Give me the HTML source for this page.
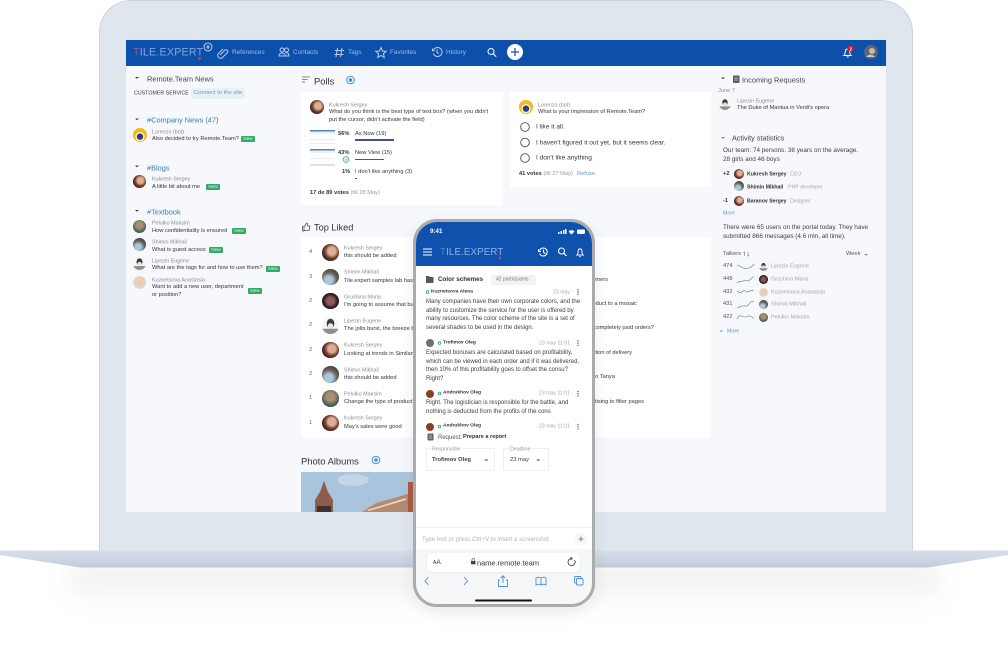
<!DOCTYPE html>
<html><head><meta charset="utf-8"><style>
html,body{margin:0;padding:0;background:#fff;width:1008px;height:658px;overflow:hidden}
body{position:relative;font-family:"Liberation Sans",sans-serif;color:#3a3d42}
.t{position:absolute;white-space:nowrap;line-height:1;transform:translateY(-50%);font-size:5.7px;color:#33363b;margin-top:.6px}
.n{color:#8a8d92;font-size:5.4px}
.h{font-size:7.4px;color:#3f4348}
.l{font-size:7.4px;color:#3b7cb9}
.v{color:#9dbde6;font-size:6.4px}
.b{position:absolute;width:14px;height:6px;background:#35a96b;color:#dff5e8;font-size:4.6px;line-height:6px;text-align:center;border-radius:1px}
.a{position:absolute;border-radius:50%;background:#654}
.k{background:radial-gradient(circle at 58% 42%,#dcae98 0 28%,#7b3f2e 50%,#2c1c1a 75%)}
.s{background:radial-gradient(circle at 40% 70%,#a8c8dc 0 25%,#6f665c 50%,#39352f 85%)}
.g{background:radial-gradient(circle at 50% 50%,#8d5a58 0 30%,#2b1a20 60%)}
.e{background:radial-gradient(circle at 50% 52%,#efe4dc 0 20%,transparent 23%),radial-gradient(ellipse at 50% 38%,#3a3a3a 0 30%,transparent 33%),linear-gradient(#f6f6f6 0 68%,#8d8f92 70%)}
.p{background:radial-gradient(circle at 50% 40%,#a79172 0 30%,#3c5a4c 70%)}
.z{background:radial-gradient(circle at 55% 45%,#e9cdb8 0 40%,#dce0e4 75%)}
.o{background:radial-gradient(circle at 50% 62%,#26407a 0 26%,#f7e9b8 30% 40%,#f3b71f 44%)}
.c{position:absolute;background:#fff}
.m{font-size:6px;color:#3c3f44}
.d{color:#a5a8ac;font-size:5.2px}
.q{font-size:5.2px;font-weight:bold;color:#2f3237}
.qq{font-size:4.9px;font-weight:bold;color:#2f3237}
.w{font-size:6.35px;color:#3c3f44}
</style></head><body>

<div style="position:absolute;left:70px;top:568px;width:870px;height:40px;background:linear-gradient(#ece9e5,#f8f8f8 60%,#fff);filter:blur(12px)"></div>

<div style="position:absolute;left:99px;top:0;width:814px;height:552px;background:#e0e6ee;border-radius:32px 32px 0 0;border:1px solid #ccd3dc;border-bottom:0;box-sizing:border-box"></div>
<svg style="position:absolute;left:0;top:0" width="1008" height="658">
<defs><linearGradient id="bs" x1="0" y1="0" x2="0" y2="1"><stop offset="0" stop-color="#d6deE8"/><stop offset=".7" stop-color="#c9d3e0"/><stop offset="1" stop-color="#c0cad8"/></linearGradient></defs>
<polygon points="0,550.5 1008,550.5 1008,555 928,567.5 80,567.5 0,555" fill="url(#bs)"/>
</svg>

<div style="position:absolute;left:126px;top:40px;width:760px;height:472px;background:#f7f8fb"></div>
<div style="position:absolute;left:126px;top:40px;width:760px;height:26px;background:#0d50a9"></div>

<!-- header -->
<div class="t" style="left:133px;top:52.5px;font-size:10.7px;color:#7ea5dc;letter-spacing:.2px"><span style="color:#8a5d9a">T</span>ILE.EXPERT</div>
<div class="t v" style="left:232px;top:52.5px">References</div>
<div class="t v" style="left:293px;top:52.5px">Contacts</div>
<div class="t v" style="left:348px;top:52.5px">Tags</div>
<div class="t v" style="left:390px;top:52.5px">Favorites</div>
<div class="t v" style="left:446px;top:52.5px">History</div>

<!-- left -->
<div class="t h" style="left:147px;top:78.5px">Remote.Team News</div>
<div class="t" style="left:134px;top:93.5px;font-size:5.3px">CUSTOMER SERVICE</div>
<div style="position:absolute;left:191px;top:88px;width:54px;height:11px;background:#e9f1f8;border-radius:1px"></div>
<div class="t" style="left:194px;top:93.5px;font-size:5.8px;color:#5c9ad0">Connect to the site</div>

<div class="t l" style="left:147px;top:119px">#Company News (47)</div>
<div class="a o" style="left:133px;top:128px;width:14px;height:14px"></div>
<div class="t n" style="left:152px;top:132px">Lorenzo (bot)</div>
<div class="t" style="left:152px;top:139.5px">Also decided to try Remote.Team?</div>
<div class="b" style="left:241px;top:136px">New</div>

<div class="t l" style="left:147px;top:167px">#Blogs</div>
<div class="a k" style="left:133px;top:175px;width:13px;height:13px"></div>
<div class="t n" style="left:152px;top:179.5px">Kukresh Sergey</div>
<div class="t" style="left:152px;top:187px">A little bit about me</div>
<div class="b" style="left:206px;top:184px">New</div>

<div class="t l" style="left:147px;top:211px">#Textbook</div>
<div class="a p" style="left:133px;top:219.5px;width:13px;height:13px"></div>
<div class="t n" style="left:152px;top:223.5px">Pelulko Maksim</div>
<div class="t" style="left:152px;top:231px">How confidentiality is ensured</div>
<div class="b" style="left:232px;top:228px">New</div>
<div class="a s" style="left:133px;top:238px;width:13px;height:13px"></div>
<div class="t n" style="left:152px;top:242.5px">Shimin Mikhail</div>
<div class="t" style="left:152px;top:250px">What is guest access</div>
<div class="b" style="left:209px;top:247px">New</div>
<div class="a e" style="left:133px;top:257px;width:13px;height:13px"></div>
<div class="t n" style="left:152px;top:261px">Lipezin Eugene</div>
<div class="t" style="left:152px;top:268.5px">What are the tags for and how to use them?</div>
<div class="b" style="left:266px;top:265.5px">New</div>
<div class="a z" style="left:133px;top:275.5px;width:13px;height:13px"></div>
<div class="t n" style="left:152px;top:280px">Kuznetsova Anastasia</div>
<div class="t" style="left:152px;top:287.5px">Want to add a new user, department</div>
<div class="t" style="left:152px;top:295px">or position?</div>
<div class="b" style="left:248px;top:288px">New</div>

<!-- polls -->
<div class="t" style="left:314px;top:80px;font-size:9.4px;color:#2f3237">Polls</div>
<div class="c" style="left:301px;top:92px;width:202px;height:113px"></div>
<div class="a k" style="left:310px;top:100px;width:14px;height:14px"></div>
<div class="t n" style="left:329px;top:105px">Kukresh Sergey</div>
<div class="t" style="left:329px;top:112.5px">What do you think is the best type of text box? (when you didn't</div>
<div class="t" style="left:329px;top:120px">put the cursor, didn't activate the field)</div>
<div style="position:absolute;left:310px;top:129px;width:25px;height:21px;background:linear-gradient(#fff 0 1px,#4a86c8 1px 2.5px,#eef1f4 2.5px 5px,#fff 5px 10px,#e8eaed 10px 11px,#fff 11px 14px,#e8eaed 14px 15px,#fff 15px)"></div>
<div style="position:absolute;left:310px;top:148px;width:25px;height:21px;background:linear-gradient(#fff 0 1px,#4a86c8 1px 2.5px,#eef1f4 2.5px 5px,#fff 5px 10px,#e8eaed 10px 11px,#fff 11px 16px,#dfe1e4 16px 18px,#fff 18px)"></div>
<div class="t" style="left:338px;top:134px;font-weight:bold;font-size:5.7px">56%</div>
<div class="t" style="left:355px;top:134px">As Now (19)</div>
<div style="position:absolute;left:355px;top:139px;width:39px;height:1.7px;background:#4a4f8e"></div>
<div class="t" style="left:338px;top:153.5px;font-weight:bold;font-size:5.7px;background:#fff">43%</div>
<div class="t" style="left:355px;top:153.5px">New View (15)</div>
<div style="position:absolute;left:355px;top:158.5px;width:29px;height:1.7px;background:#4a4f8e"></div>
<div class="t" style="left:342px;top:172px;font-weight:bold;font-size:5.7px">1%</div>
<div class="t" style="left:355px;top:172px">I don't like anything (3)</div>
<div style="position:absolute;left:355px;top:177.5px;width:2px;height:1.7px;background:#4a4f8e"></div>
<div class="t" style="left:310px;top:193px"><b>17 de 89 votes</b> <span style="color:#999">(till 28 May)</span></div>

<div class="c" style="left:510px;top:92px;width:201px;height:95px"></div>
<div class="a o" style="left:519px;top:100px;width:14px;height:14px"></div>
<div class="t n" style="left:538px;top:105px">Lorenzo (bot)</div>
<div class="t" style="left:538px;top:112.5px">What is your impression of Remote.Team?</div>
<div class="t" style="left:536px;top:127px;font-size:6.55px">I like it all.</div>
<div class="t" style="left:536px;top:143px;font-size:6.55px">I haven't figured it out yet, but it seems clear.</div>
<div class="t" style="left:536px;top:158px;font-size:6.55px">I don't like anything</div>
<div class="t" style="left:519px;top:174px"><b>41 votes</b> <span style="color:#999">(till 27 May)</span></div>
<div class="t" style="left:577px;top:174px;color:#5c9ad0">Refuse</div>

<!-- top liked -->
<div class="t" style="left:314px;top:227.5px;font-size:9.2px;color:#2f3237">Top Liked</div>
<div class="c" style="left:301px;top:237px;width:410px;height:201px"></div>

<div class="t" style="left:309px;top:252.5px;color:#666">4</div>
<div class="a k" style="left:322px;top:244px;width:16.5px;height:16.5px"></div>
<div class="t n" style="left:344px;top:248px">Kukresh Sergey</div>
<div class="t" style="left:344px;top:256.5px">this should be added</div>

<div class="t" style="left:309px;top:277px;color:#666">3</div>
<div class="a s" style="left:322px;top:268.5px;width:16.5px;height:16.5px"></div>
<div class="t n" style="left:344px;top:272.5px">Shimin Mikhail</div>
<div class="t" style="left:344px;top:281px">Tile.expert samples lab has an extensive range for customers</div>

<div class="t" style="left:309px;top:301px;color:#666">2</div>
<div class="a g" style="left:322px;top:292.5px;width:16.5px;height:16.5px"></div>
<div class="t n" style="left:344px;top:297px">Grushina Maria</div>
<div class="t" style="left:344px;top:305px">I'm going to assume that but</div>

<div class="t" style="left:309px;top:325.5px;color:#666">2</div>
<div class="a e" style="left:322px;top:317px;width:16.5px;height:16.5px"></div>
<div class="t n" style="left:344px;top:321.5px">Lipezin Eugene</div>
<div class="t" style="left:344px;top:329.5px">The jolts burst, the breeze blo</div>

<div class="t" style="left:309px;top:350px;color:#666">2</div>
<div class="a k" style="left:322px;top:341.5px;width:16.5px;height:16.5px"></div>
<div class="t n" style="left:344px;top:345.5px">Kukresh Sergey</div>
<div class="t" style="left:344px;top:354px">Looking at trends in Similarw</div>

<div class="t" style="left:309px;top:374px;color:#666">2</div>
<div class="a s" style="left:322px;top:366px;width:16.5px;height:16.5px"></div>
<div class="t n" style="left:344px;top:370px">Shimin Mikhail</div>
<div class="t" style="left:344px;top:378.5px">this should be added</div>

<div class="t" style="left:309px;top:398.5px;color:#666">1</div>
<div class="a p" style="left:322px;top:390px;width:16.5px;height:16.5px"></div>
<div class="t n" style="left:344px;top:394.5px">Pelulko Maksim</div>
<div class="t" style="left:344px;top:402.5px">Change the type of product b</div>

<div class="t" style="left:309px;top:423px;color:#666">1</div>
<div class="a k" style="left:322px;top:414.5px;width:16.5px;height:16.5px"></div>
<div class="t n" style="left:344px;top:418.5px">Kukresh Sergey</div>
<div class="t" style="left:344px;top:427px">May's sales were good</div>

<div class="t" style="right:400px;top:280px">omers</div>
<div class="t" style="right:371px;top:304.5px">roduct to a mosaic</div>
<div class="t" style="right:354px;top:328.5px">t completely paid orders?</div>
<div class="t" style="right:376px;top:353px">ation of delivery</div>
<div class="t" style="right:393px;top:377px">d to Tanya</div>
<div class="t" style="right:364px;top:402px">ertising to filter pages</div>

<!-- photo albums -->
<div class="t" style="left:301px;top:460.5px;font-size:9.4px;color:#2f3237">Photo Albums</div>
<svg style="position:absolute;left:301px;top:472px" width="125" height="40">
<rect width="125" height="40" fill="#a9c5dd"/>
<ellipse cx="52" cy="8" rx="16" ry="6" fill="#c3d7e7"/>
<polygon points="23,9 27,20 32,28 32,40 14,40 14,28 19,20" fill="#8d5c4a"/>
<rect x="16" y="34" width="14" height="6" fill="#3f3029"/>
<polygon points="61,40 75,31 107,22 107,40" fill="#b58a6e"/>
<polygon points="66,38 105,26 105,28 68,39" fill="#e8d8c4"/>
<rect x="107" y="10" width="18" height="30" fill="#ac5a3e"/>
</svg>

<!-- right -->
<div class="t h" style="left:742px;top:79px">Incoming Requests</div>
<div class="t" style="left:718px;top:91.5px;color:#8d9095">June 7</div>
<div class="a e" style="left:719px;top:98px;width:12px;height:12px"></div>
<div class="t n" style="left:737px;top:101.5px">Lipezin Eugene</div>
<div class="t" style="left:737px;top:108.5px">The Duke of Mantua in Verdi's opera</div>
<div class="t h" style="left:732px;top:137.5px;font-size:7.2px">Activity statistics</div>
<div class="t w" style="left:723px;top:150.5px">Our team: 74 persons. 38 years on the average.</div>
<div class="t w" style="left:723px;top:159.5px">28 girls and 46 boys</div>
<div class="t" style="left:723px;top:174px;font-weight:bold">+2</div>
<div class="a k" style="left:734px;top:169px;width:10px;height:10px"></div>
<div class="t q" style="left:747px;top:174px">Kukresh Sergey</div>
<div class="t d" style="left:790px;top:174px">CEO</div>
<div class="a s" style="left:734px;top:181px;width:10px;height:10px"></div>
<div class="t q" style="left:747px;top:187px">Shimin Mikhail</div>
<div class="t d" style="left:788px;top:187px">PHP developer</div>
<div class="t" style="left:723px;top:201px;font-weight:bold">-1</div>
<div class="a k" style="left:734px;top:196px;width:10px;height:10px"></div>
<div class="t q" style="left:747px;top:201px">Baranov Sergey</div>
<div class="t d" style="left:790px;top:201px">Designer</div>
<div class="t" style="left:723px;top:213px;color:#5c9ad0;font-size:5.2px">More</div>
<div class="t w" style="left:723px;top:227px">There were 65 users on the portal today. They have</div>
<div class="t w" style="left:723px;top:236px">submitted 866 messages (4.6 mln, all time).</div>
<div class="t" style="left:723px;top:254.5px;color:#555">Talkers</div>
<div class="t" style="left:846px;top:254.5px;color:#555">Week</div>

<div class="t" style="left:723px;top:266.5px;color:#555">474</div>
<div class="a e" style="left:758.5px;top:262px;width:9px;height:9px"></div>
<div class="t d" style="left:771px;top:266.5px;font-size:5.5px">Lipezin Eugene</div>
<div class="t" style="left:723px;top:279px;color:#555">448</div>
<div class="a g" style="left:758.5px;top:274.5px;width:9px;height:9px"></div>
<div class="t d" style="left:771px;top:279px;font-size:5.5px">Grushina Maria</div>
<div class="t" style="left:723px;top:292px;color:#555">432</div>
<div class="a z" style="left:758.5px;top:287.5px;width:9px;height:9px"></div>
<div class="t d" style="left:771px;top:292px;font-size:5.5px">Kuznetsova Anastasia</div>
<div class="t" style="left:723px;top:304.5px;color:#555">431</div>
<div class="a s" style="left:758.5px;top:300px;width:9px;height:9px"></div>
<div class="t d" style="left:771px;top:304.5px;font-size:5.5px">Shimin Mikhail</div>
<div class="t" style="left:723px;top:317px;color:#555">422</div>
<div class="a p" style="left:758.5px;top:312.5px;width:9px;height:9px"></div>
<div class="t d" style="left:771px;top:317px;font-size:5.5px">Pelulko Maksim</div>
<div class="t" style="left:727px;top:331px;color:#5c9ad0;font-size:5.4px">More</div>

<!-- laptop icons -->
<svg style="position:absolute;left:0;top:0" width="1008" height="658" fill="none">
<circle cx="208" cy="47" r="4" stroke="#dfe8f5" stroke-width=".8"/>
<path d="M206 47h4M208 45v4" stroke="#dfe8f5" stroke-width=".8"/>
<circle cx="199.500" cy="58.500" r="1.500" fill="#a0467f"/>
<g stroke="#b8cdea" stroke-width="1">
<path d="M220 55l5-5a1.800 1.800 0 0 1 2.500 2.500l-5.500 5.500a3 3 0 0 1-4-4l5-5"/>
<circle cx="282" cy="50" r="2"/><circle cx="286.500" cy="50" r="2"/><path d="M279 56c0-4 6-4 6.500 0zM285 56h4c0-3-2-3.500-3.500-3.500"/>
<path d="M337.500 48l-1.500 9M342 48l-1.500 9M335 50.500h9M334.500 54.500h9"/>
<path d="M381 47.500l1.500 3.500 3.700.3-2.800 2.400.9 3.700-3.300-2-3.300 2 .9-3.700-2.800-2.400 3.700-.3z"/>
<path d="M433.500 50a4.500 4.500 0 1 1-.2 3.500M432.500 48.500v2.300h2.300M437 49.500v3l2 1"/>
</g>
<circle cx="491" cy="51.500" r="3" stroke="#dbe6f5" stroke-width="1.200"/><path d="M493.200 53.700l3 3" stroke="#dbe6f5" stroke-width="1.300"/>
<circle cx="515" cy="52" r="8" fill="#fff"/><path d="M511 52h8M515 48v8" stroke="#0d50a9" stroke-width="1.200"/>
<path d="M844 55.500c1.500-1 1-3.500 1.500-5 .5-2 3.500-2 4 0 .5 1.500 0 4 1.500 5z" stroke="#fff" stroke-width="1"/><path d="M846.800 57h2" stroke="#fff"/>
<circle cx="850.500" cy="48.500" r="3" fill="#d32030"/>
<text x="849.500" y="50.500" font-size="4.500" fill="#fff" font-family="Liberation Sans" font-weight="bold">2</text>
<circle cx="871" cy="52" r="7" fill="#5f6470"/><circle cx="872" cy="51" r="3" fill="#c9b8a8"/><path d="M866 57c2-3 7-3 9 0" fill="#c6ccd4"/>

<g fill="#3a3d42">
<path d="M135 77h4l-2 1.800z"/><path d="M135 118.500h4l-2 1.800z"/><path d="M135 165.500h4l-2 1.800z"/><path d="M135 210h4l-2 1.800z"/>
<path d="M721 77.500h4l-2 1.800z"/><path d="M721 137h4l-2 1.800z" fill="#777"/>
<path d="M864 254h4l-2 1.500z" fill="#777"/><path d="M719.500 330.500h3.500l-1.700 1.700z" fill="#5c9ad0"/>
</g>
<path d="M302 77h8M302 79.500h5.500M302 82h3" stroke="#666" stroke-width=".8"/>
<circle cx="350.500" cy="80" r="3.800" stroke="#3f8fd4" stroke-width="1"/><circle cx="350.500" cy="80" r="1.800" fill="#3f8fd4"/>
<circle cx="376" cy="460" r="3.800" stroke="#3f8fd4" stroke-width="1"/><circle cx="376" cy="460" r="1.800" fill="#3f8fd4"/>
<circle cx="346" cy="159.500" r="2.800" stroke="#3f8fd4" stroke-width=".8"/><path d="M344.800 159.500l1 1 1.500-1.800" stroke="#3f8fd4" stroke-width=".7"/>
<g stroke="#4a4d52" stroke-width=".9"><circle cx="525" cy="127" r="4.300"/><circle cx="525" cy="142.500" r="4.300"/><circle cx="525" cy="158" r="4.300"/></g>
<path d="M302.500 226.500v4.500h1.500v-4.500zM304.500 226.500l2-3.500c1 0 1.200 1 1 3h2.500l-1 4.500h-4.500" stroke="#555" stroke-width=".8"/>
<rect x="733" y="75.500" width="6.500" height="7.500" rx=".6" fill="#5b5f64"/><path d="M734.500 78h3.500M734.500 80h3.500" stroke="#fff" stroke-width=".6"/>
<path d="M744.500 256v-4l-1 1M748 252v4l1-1" stroke="#777" stroke-width=".6"/>
<g stroke="#5a7ea6" stroke-width=".6">
<path d="M737 265c3 0 4 3 8 3.500s6-1 9-4.500"/>
<path d="M737 283c3-3 6-1 8-2.500s2 1.500 4 0 3-3 5-4"/>
<path d="M737 291c2 2 4 2 6 0s3 2 5 1 3-2 6-1"/>
<path d="M737 308c3-1 5-3 8-2s4-3 6-4 2 0 3-.5"/>
<path d="M737 319c1-2 2-4 4-3s3 1 5 1 2-2 4-1 3 2 4 2"/>
</g>
</svg>

<!-- phone -->
<div style="position:absolute;left:413px;top:219px;width:182px;height:388px;box-sizing:border-box;border:3px solid #a9abad;border-radius:24px;background:#fff;overflow:hidden;box-shadow:0 6px 16px rgba(90,100,120,.12)">
<div style="position:absolute;left:0;top:0;width:176px;height:44px;background:#0f52ae"></div>
<div style="position:absolute;left:0;top:327px;width:176px;height:58px;background:#f6f7f9"></div>
<div style="position:absolute;left:0;top:305px;width:176px;height:1px;background:#f0f1f3"></div>
</div>
<div class="t" style="left:430px;top:231px;color:#fff;font-size:6.2px;font-weight:bold">9:41</div>
<div class="t" style="left:440px;top:252.5px;font-size:9.7px;color:#8fb2e4;letter-spacing:.15px"><span style="color:#5f7fb4">T</span>ILE.EXPERT</div>

<div class="t" style="left:438px;top:279.5px;font-size:6.3px;font-weight:bold;color:#2f3237">Color schemes</div>
<div style="position:absolute;left:491px;top:275px;width:45px;height:9.500px;background:#f2f3f5;border-radius:2px"></div>
<div class="t" style="left:496px;top:279.7px;font-size:5px;color:#75787d">42 participants</div>
<div class="t qq" style="left:431px;top:292px">Kuznetsova Alena</div>
<div class="t d" style="left:553px;top:292px">23 may</div>
<div class="t m" style="left:426px;top:301.5px">Many companies have their own corporate colors, and the</div>
<div class="t m" style="left:426px;top:310px">ability to customize the service for the user is offered by</div>
<div class="t m" style="left:426px;top:318.5px">many resources. The color scheme of the site is a set of</div>
<div class="t m" style="left:426px;top:327.500px">several shades to be used in the design.</div>

<div class="a" style="left:426px;top:339px;width:8px;height:8px;background:#6c6f73"></div>
<div class="t qq" style="left:443px;top:343px">Trofimov Oleg</div>
<div class="t d" style="left:539px;top:343px">23 may 11:01</div>
<div class="t m" style="left:426px;top:352.500px">Expected bonuses are calculated based on profitability,</div>
<div class="t m" style="left:426px;top:361px">which can be viewed in each order and if it was delivered,</div>
<div class="t m" style="left:426px;top:369.500px">then 10% of this profitability goes to offset the consu?</div>
<div class="t m" style="left:426px;top:378px">Right?</div>

<div class="a" style="left:426px;top:389.500px;width:8px;height:8px;background:#8a3f24"></div>
<div class="t qq" style="left:443px;top:393.500px">Andrukhov Oleg</div>
<div class="t d" style="left:539px;top:393.500px">23 may 11:01</div>
<div class="t m" style="left:426px;top:402.500px">Right. The logistician is responsible for the battle, and</div>
<div class="t m" style="left:426px;top:411.500px">nothing is deducted from the profits of the cons</div>

<div class="a" style="left:426px;top:422.500px;width:8px;height:8px;background:#8a3f24"></div>
<div class="t qq" style="left:443px;top:426.500px">Andrukhov Oleg</div>
<div class="t d" style="left:539px;top:426.500px">23 may 11:01</div>
<div class="t" style="left:438px;top:437px;font-size:6px;color:#55585c">Request:</div>
<div class="t" style="left:463px;top:437px;font-size:5.6px;font-weight:bold;color:#2f3237">Prepare a report</div>

<div style="position:absolute;left:426px;top:448px;width:69px;height:23px;box-sizing:border-box;border:1px solid #eceef0;border-radius:2px"></div>
<div class="t d" style="left:431px;top:449px;background:#fff;padding:0 1px;color:#999">Responsible</div>
<div class="t" style="left:432px;top:460px;font-size:5.8px;font-weight:bold;color:#3b3e43">Trofimov Oleg</div>
<div style="position:absolute;left:503px;top:448px;width:46px;height:23px;box-sizing:border-box;border:1px solid #eceef0;border-radius:2px"></div>
<div class="t d" style="left:509px;top:449px;background:#fff;padding:0 1px;color:#999">Deadline</div>
<div class="t" style="left:510px;top:460px;font-size:5.8px;color:#3b3e43">23 may</div>

<div class="t" style="left:422px;top:539px;font-size:6.08px;color:#b2b4b8">Type text or press Ctrl+V to insert a screenshot</div>

<div style="position:absolute;left:427px;top:553px;width:153px;height:19px;background:#fff;border-radius:5px;box-shadow:0 .5px 2px rgba(0,0,0,.08)"></div>
<div class="t" style="left:433px;top:562.500px;font-size:6.500px;color:#333"><span style="font-size:5px">A</span>A</div>
<div class="t" style="left:477px;top:562.500px;font-size:7.400px;color:#2f3237">name.remote.team</div>

<svg style="position:absolute;left:0;top:0" width="1008" height="658" fill="none">
<g fill="#fff"><rect x="558" y="232" width="1.500" height="2"/><rect x="560.500" y="231" width="1.500" height="3"/><rect x="563" y="230" width="1.500" height="4"/><rect x="565" y="229" width="1.500" height="5"/><rect x="577" y="229.500" width="8" height="4.500" rx="1.200"/></g>
<path d="M568.500 231.500a4 4 0 0 1 6 0l-3 3z" fill="#fff"/>
<path d="M423 249h9M423 252h9M423 255h9" stroke="#fff" stroke-width="1.100"/>
<circle cx="500" cy="258" r="1.400" fill="#a0467f"/>
<path d="M539.500 250.500a4 4 0 1 1 0 3M538.500 249v2.500h2.500M543.500 249.500v3l2 1" stroke="#fff" stroke-width="1"/>
<circle cx="561.500" cy="251" r="3" stroke="#fff" stroke-width="1.100"/><path d="M563.700 253.200l2.800 2.800" stroke="#fff" stroke-width="1.200"/>
<path d="M577 255c1.300-1 1-3.300 1.300-4.800.5-1.800 3-1.800 3.500 0 .3 1.500 0 3.800 1.300 4.800zM579.300 256.600h1.600" stroke="#fff" stroke-width="1"/>
<path d="M426 276h3l1 1h3.500v6h-7.500z" fill="#55585d"/>
<circle cx="427.500" cy="292" r="1.300" stroke="#32a868" stroke-width=".8"/>
<circle cx="439.500" cy="343" r="1.300" stroke="#32a868" stroke-width=".8"/>
<circle cx="439.500" cy="393.500" r="1.300" stroke="#32a868" stroke-width=".8"/>
<circle cx="439.500" cy="426.500" r="1.300" stroke="#32a868" stroke-width=".8"/>
<g fill="#55585d"><circle cx="578" cy="290" r=".7"/><circle cx="578" cy="292.200" r=".7"/><circle cx="578" cy="294.400" r=".7"/>
<circle cx="578" cy="341" r=".7"/><circle cx="578" cy="343.200" r=".7"/><circle cx="578" cy="345.400" r=".7"/>
<circle cx="578" cy="391.500" r=".7"/><circle cx="578" cy="393.700" r=".7"/><circle cx="578" cy="395.900" r=".7"/>
<circle cx="578" cy="424.500" r=".7"/><circle cx="578" cy="426.700" r=".7"/><circle cx="578" cy="428.900" r=".7"/>
<path d="M484.300 459.500h4l-2 1.800zM536.300 459.500h4l-2 1.800z"/></g>
<rect x="427.500" y="433.500" width="6" height="7" rx=".6" fill="#62656a"/><path d="M429 436h3M429 438h3" stroke="#fff" stroke-width=".6"/>
<circle cx="581" cy="539" r="6" fill="#f7f7f8"/><path d="M578.500 539h5M581 536.500v5" stroke="#666" stroke-width=".8"/>
<path d="M472 561v-1.200a1.300 1.300 0 0 1 2.600 0v1.200" stroke="#444" stroke-width=".6"/><rect x="471" y="561" width="4.500" height="3.300" fill="#444"/>
<path d="M574.500 560a3.600 3.600 0 1 1-3-1.500M570.500 557l1.800 1.500-1.800 1.500" stroke="#333" stroke-width=".8"/>
<g stroke="#4d8fdc" stroke-width=".9">
<path d="M428.500 577l-3.500 4 3.500 4M464 577l3.500 4-3.500 4"/>
<path d="M500 580h-1.500v6.500h9v-6.500H506M503 583v-7M500.800 578l2.200-2.200 2.200 2.200"/>
<path d="M541 578c-1.500-1-3.500-1-5 0v7c1.500-1 3.500-1 5 0 1.500-1 3.500-1 5 0v-7c-1.500-1-3.500-1-5 0zM541 578v7"/>
<rect x="574.500" y="576.500" width="6.500" height="6.500" rx="1"/><rect x="576.500" y="578.500" width="6.500" height="6.500" rx="1" fill="#f6f7f9"/>
</g>
<rect x="475" y="599.500" width="57" height="2" rx="1" fill="#111"/>
</svg>
</body></html>
